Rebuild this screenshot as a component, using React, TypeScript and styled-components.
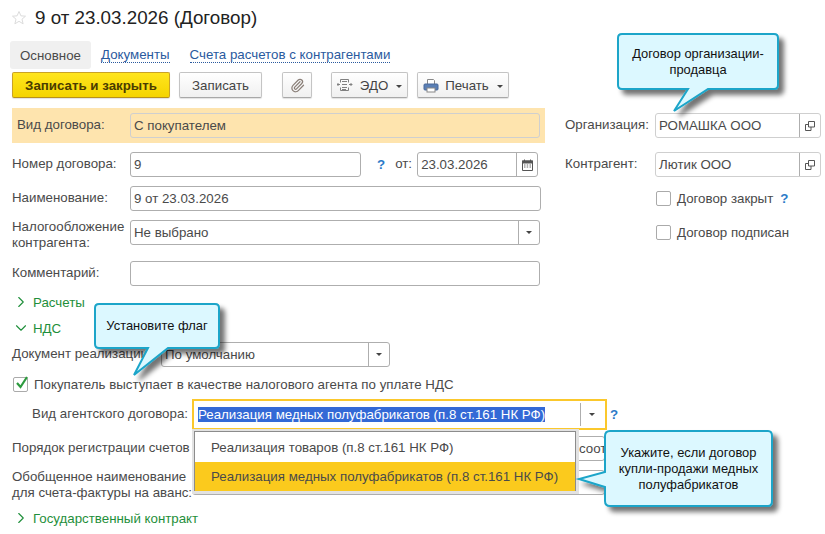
import React from 'react'
import styled, { createGlobalStyle } from 'styled-components'
import { ChevronDown, ChevronRight, Paperclip } from 'lucide-react'

const GlobalStyle = createGlobalStyle`
  html, body {
    margin: 0;
    padding: 0;
    background: #fff;
  }
  body {
    font-family: "Liberation Sans", Arial, sans-serif;
    font-size: 13.3px;
    color: #4a4a4a;
  }
`

const Page = styled.div`
  position: relative;
  width: 825px;
  height: 534px;
  overflow: hidden;
  box-sizing: border-box;
  padding: 0 4px 0 12px;
`

const TitleBar = styled.div`
  height: 41px;
  display: flex;
  align-items: center;
  gap: 8px;
  margin-left: -1px;
  padding-bottom: 5px;
  box-sizing: border-box;
`

const Title = styled.h1`
  margin: 0;
  font-size: 18.8px;
  font-weight: 400;
  color: #222;
`

const Tabs = styled.div`
  height: 28px;
  display: flex;
  align-items: center;
  margin-left: -2px;
`

const ActiveTab = styled.div`
  height: 28px;
  width: 81px;
  display: flex;
  align-items: center;
  justify-content: center;
  background: #f0f0f0;
  border-radius: 3px;
`

const TabLink = styled.a<{ $gap: number }>`
  margin-left: ${(p) => p.$gap}px;
  color: #2a5a9e;
  border-bottom: 1px dotted #2a5a9e;
  line-height: 14px;
`

const Toolbar = styled.div`
  margin-top: 3px;
  height: 26px;
  display: flex;
`

const Button = styled.button<{ $width: number; $gap?: number }>`
  width: ${(p) => p.$width}px;
  margin-left: ${(p) => p.$gap || 0}px;
  height: 26px;
  box-sizing: border-box;
  display: flex;
  align-items: center;
  justify-content: center;
  gap: 6px;
  padding: 0;
  font: inherit;
  color: #444;
  border: 1px solid #c4c4c4;
  border-bottom-color: #a8a8a8;
  border-radius: 2px;
  background: linear-gradient(#fff, #f0f0f0);
  box-shadow: 0 1px 1px rgba(0, 0, 0, 0.12);
`

const PrimaryButton = styled(Button)`
  color: #4a3c00;
  font-weight: 700;
  border: 1px solid #c9a227;
  border-bottom-color: #b8911a;
  background: linear-gradient(#ffe51e, #f5d400);
`

const Caret = styled.span`
  width: 0;
  height: 0;
  margin-left: 2px;
  margin-top: 2px;
  border-left: 3px solid transparent;
  border-right: 3px solid transparent;
  border-top: 3px solid #444;
`

const Columns = styled.div`
  display: flex;
  margin-top: 10px;
`

const LeftColumn = styled.div`
  width: 533px;
`

const RightColumn = styled.div`
  margin-left: 20px;
  width: 256px;
`

const Band = styled.div`
  height: 35px;
  display: flex;
  align-items: center;
  padding-left: 5px;
  background: #fee4ae;
`

const Row = styled.div<{ $top: number; $height?: number }>`
  display: flex;
  align-items: center;
  height: ${(p) => p.$height || 25}px;
  margin-top: ${(p) => p.$top}px;
`

const Label = styled.label<{ $width: number }>`
  width: ${(p) => p.$width}px;
  flex: none;
  line-height: 16px;
  padding-bottom: 2px;
  white-space: nowrap;
`

const MultilineLabel = styled(Label)`
  align-self: flex-start;
  margin-top: -1px;
  padding-bottom: 0;
`

const AgentLabel = styled(Label)`
  box-sizing: border-box;
  padding-right: 4px;
  text-align: right;
`

const DateLabel = styled(Label)`
  margin-left: 10px;
`

const Field = styled.div<{ $width: number; $disabled?: boolean }>`
  width: ${(p) => p.$width}px;
  height: 25px;
  flex: none;
  box-sizing: border-box;
  display: flex;
  align-items: center;
  padding-left: 3px;
  border: 1px solid ${(p) => (p.$disabled ? '#cfcfcf' : '#aeaeae')};
  border-radius: 3px;
  background: ${(p) => (p.$disabled ? 'transparent' : '#fff')};
  white-space: nowrap;
`

const FieldValue = styled.span`
  flex: 1;
`

const HiddenValue = styled(FieldValue)`
  padding-left: 383px;
`

const FieldButton = styled.span`
  width: 20px;
  height: 100%;
  flex: none;
  display: flex;
  align-items: center;
  justify-content: center;
  border-left: 1px solid #aeaeae;
`

const Help = styled.span<{ $gap: number }>`
  margin-left: ${(p) => p.$gap}px;
  color: #2b7bc8;
  font-weight: 700;
`

const CheckRow = styled.div<{ $top: number; $left?: number }>`
  display: flex;
  align-items: center;
  gap: 6px;
  height: 16px;
  margin-top: ${(p) => p.$top}px;
  margin-left: ${(p) => p.$left || 0}px;
`

const CheckBox = styled.span`
  position: relative;
  width: 15px;
  height: 15px;
  flex: none;
  box-sizing: border-box;
  background: #fff;
  border: 1px solid #aaa;
  border-radius: 2px;
`

const CheckMark = styled.svg`
  position: absolute;
  left: 0;
  top: -3px;
`

const Group = styled.div<{ $top: number }>`
  display: flex;
  align-items: center;
  gap: 3px;
  height: 16px;
  margin-top: ${(p) => p.$top}px;
  color: #1f8f3b;
`

const ActiveField = styled.div`
  width: 415px;
  height: 31px;
  flex: none;
  box-sizing: border-box;
  display: flex;
  align-items: center;
  padding-left: 4px;
  background: #fff;
  border: 2px solid #fbc82c;
  white-space: nowrap;
`

const Selection = styled.span`
  color: #fff;
  background: #3369d6;
  line-height: 15px;
`

const ActiveValue = styled.span`
  width: 382px;
  flex: none;
`

const ActiveButton = styled.span`
  height: 23px;
  width: 22px;
  display: flex;
  align-items: center;
  justify-content: center;
  border-left: 1px solid #aeaeae;
`

const Popup = styled.div`
  position: absolute;
  left: 192px;
  top: 429px;
  width: 387px;
  height: 65px;
  box-sizing: border-box;
  padding: 2px 3px 3px 2px;
  background: #e2e2e2;
`

const PopupList = styled.div`
  height: 100%;
  box-sizing: border-box;
  padding-top: 1px;
  background: #fff;
  border: 1px solid #8c8c8c;
`

const PopupItem = styled.div<{ $active?: boolean }>`
  height: 29px;
  display: flex;
  align-items: center;
  padding-left: 16px;
  white-space: nowrap;
  background: ${(p) => (p.$active ? '#fbca1d' : 'transparent')};
`

const Callout = styled.div<{ $left: number; $top: number; $width: number; $height: number }>`
  position: absolute;
  left: ${(p) => p.$left}px;
  top: ${(p) => p.$top}px;
  width: ${(p) => p.$width}px;
  height: ${(p) => p.$height}px;
  display: flex;
  align-items: center;
  justify-content: center;
  text-align: center;
  font-size: 12.9px;
  line-height: 16px;
  color: #111;
`

const CalloutShape = styled.svg`
  position: absolute;
  left: 0;
  top: 0;
  overflow: visible;
`

const CalloutText = styled.div`
  position: relative;
`

const bubblePath = (w: number, h: number, tail: string) => {
  const r = 5
  return `M${r} 1 H${w - r} Q${w - 1} 1 ${w - 1} ${r} V${h - r} Q${w - 1} ${h - 1} ${w - r} ${h - 1} ${tail} H${r} Q1 ${h - 1} 1 ${h - r} V${r} Q1 1 ${r} 1 Z`
}

const Bubble = ({ w, h, d }: { w: number; h: number; d: string }) => {
  const id = `shadow${w}`
  return (
    <CalloutShape width={w} height={h}>
      <defs>
        <filter id={id} x="-20%" y="-20%" width="150%" height="170%">
          <feGaussianBlur in="SourceAlpha" stdDeviation="2.5" />
          <feOffset dx="5" dy="5" />
          <feComponentTransfer>
            <feFuncA type="linear" slope="0.55" />
          </feComponentTransfer>
          <feMerge>
            <feMergeNode />
            <feMergeNode in="SourceGraphic" />
          </feMerge>
        </filter>
      </defs>
      <path d={d} fill="#dcf8ff" stroke="#1ba5c9" strokeWidth="2" filter={`url(#${id})`} />
    </CalloutShape>
  )
}

const StarIcon = () => (
  <svg width="16" height="16" viewBox="0 0 16 16">
    <path d="M8 1.5l1.9 4.3 4.6.4-3.5 3 1.1 4.6L8 11.3l-4.1 2.5L5 9.2l-3.5-3 4.6-.4z" fill="#fff" stroke="#dcdcdc" />
  </svg>
)

const EdoIcon = () => (
  <svg width="17" height="14" viewBox="0 0 17 14" fill="none" stroke="#808080">
    <path d="M3.500 1.500h8v3M3.500 1.500v3M3.500 9.500v3h8v-3" />
    <path d="M5 3.500h5M5 6.500h5M5 9.500h5M5 11.500h4" />
    <path d="M0 6.500h3M1.500 5L0 6.500 1.500 8M12 6.500h3M13.500 5L15 6.500 13.500 8" />
  </svg>
)

const PrintIcon = () => (
  <svg width="16" height="15" viewBox="0 0 16 15" fill="none">
    <path d="M4.5 6V1.5h6l1 1V6" fill="#fff" stroke="#888" />
    <rect x="1" y="6" width="14" height="6" rx="1" fill="#5a7fb5" stroke="#48689a" />
    <rect x="4" y="10" width="8" height="4" fill="#fff" stroke="#888" />
  </svg>
)

const CalendarIcon = () => (
  <svg width="11" height="12" viewBox="0 0 11 12">
    <path d="M0.5 2h10v9.500h-10z" fill="#fff" stroke="#555" />
    <path d="M0 1.500h11v3H0z" fill="#555" />
    <path d="M2.500 0.500v2M8.500 0.500v2" stroke="#555" />
    <path d="M2 6h1.500M4.700 6h1.500M7.500 6h1.500M2 8h1.500M4.700 8h1.500M7.500 8h1.500" stroke="#666" />
  </svg>
)

const OpenIcon = () => (
  <svg width="10" height="10" viewBox="0 0 10 10" fill="none" stroke="#555">
    <path d="M3.500 0.500h6v5.500h-6z" />
    <path d="M3.500 3.500h-3v6h5.500v-3.500" />
  </svg>
)

const SelectCaret = styled(Caret)`
  margin: 0;
`

const App = () => {
  return (
    <Page>
      <GlobalStyle />
      <TitleBar>
        <StarIcon />
        <Title>9 от 23.03.2026 (Договор)</Title>
      </TitleBar>
      <Tabs>
        <ActiveTab>Основное</ActiveTab>
        <TabLink $gap={10}>Документы</TabLink>
        <TabLink $gap={20}>Счета расчетов с контрагентами</TabLink>
      </Tabs>
      <Toolbar>
        <PrimaryButton $width={158}>Записать и закрыть</PrimaryButton>
        <Button $width={83} $gap={9}>Записать</Button>
        <Button $width={30} $gap={20}>
          <Paperclip size={15} color="#8a7f78" />
        </Button>
        <Button $width={77} $gap={19}>
          <EdoIcon />
          ЭДО
          <Caret />
        </Button>
        <Button $width={92} $gap={9}>
          <PrintIcon />
          Печать
          <Caret />
        </Button>
      </Toolbar>
      <Columns>
        <LeftColumn>
          <Band>
            <Label $width={113}>Вид договора:</Label>
            <Field $width={410} $disabled>С покупателем</Field>
          </Band>
          <Row $top={9}>
            <Label $width={118}>Номер договора:</Label>
            <Field $width={231}>9</Field>
            <Help $gap={16}>?</Help>
            <DateLabel $width={22}>от:</DateLabel>
            <Field $width={121}>
              <FieldValue>23.03.2026</FieldValue>
              <FieldButton><CalendarIcon /></FieldButton>
            </Field>
          </Row>
          <Row $top={9}>
            <Label $width={118}>Наименование:</Label>
            <Field $width={411}>9 от 23.03.2026</Field>
          </Row>
          <Row $top={9}>
            <MultilineLabel $width={118}>Налогообложение<br />контрагента:</MultilineLabel>
            <Field $width={410}>
              <FieldValue>Не выбрано</FieldValue>
              <FieldButton><SelectCaret /></FieldButton>
            </Field>
          </Row>
          <Row $top={16}>
            <Label $width={118}>Комментарий:</Label>
            <Field $width={410} />
          </Row>
          <Group $top={8}>
            <ChevronRight size={18} strokeWidth={1.5} />
            Расчеты
          </Group>
          <Group $top={10}>
            <ChevronDown size={18} strokeWidth={1.5} />
            НДС
          </Group>
          <Row $top={6}>
            <Label $width={149}>Документ реализации</Label>
            <Field $width={229}>
              <FieldValue>По умолчанию</FieldValue>
              <FieldButton><SelectCaret /></FieldButton>
            </Field>
          </Row>
          <CheckRow $top={9} $left={1}>
            <CheckBox>
              <CheckMark width="16" height="16" viewBox="0 0 16 16">
                <path d="M3 8l3.500 4L13 2" fill="none" stroke="#2c9a3e" strokeWidth="2.200" />
              </CheckMark>
            </CheckBox>
            Покупатель выступает в качестве налогового агента по уплате НДС
          </CheckRow>
          <Row $top={7} $height={31}>
            <AgentLabel $width={180}>Вид агентского договора:</AgentLabel>
            <ActiveField>
              <ActiveValue>
                <Selection>Реализация медных полуфабрикатов (п.8 ст.161 НК РФ)</Selection>
              </ActiveValue>
              <ActiveButton><SelectCaret /></ActiveButton>
            </ActiveField>
            <Help $gap={3}>?</Help>
          </Row>
          <Row $top={6}>
            <Label $width={180}>Порядок регистрации счетов</Label>
            <Field $width={413}>
              <HiddenValue>соот</HiddenValue>
            </Field>
          </Row>
          <Row $top={9}>
            <MultilineLabel $width={180}>Обобщенное наименование<br />для счета-фактуры на аванс:</MultilineLabel>
            <Field $width={413} />
          </Row>
          <Group $top={15}>
            <ChevronRight size={18} strokeWidth={1.5} />
            Государственный контракт
          </Group>
        </LeftColumn>
        <RightColumn>
          <Row $top={5}>
            <Label $width={90}>Организация:</Label>
            <Field $width={166} $disabled>
              <FieldValue>РОМАШКА ООО</FieldValue>
              <FieldButton><OpenIcon /></FieldButton>
            </Field>
          </Row>
          <Row $top={14}>
            <Label $width={90}>Контрагент:</Label>
            <Field $width={166} $disabled>
              <FieldValue>Лютик ООО</FieldValue>
              <FieldButton><OpenIcon /></FieldButton>
            </Field>
          </Row>
          <CheckRow $top={13} $left={91}>
            <CheckBox />
            Договор закрыт
            <Help $gap={1}>?</Help>
          </CheckRow>
          <CheckRow $top={18} $left={91}>
            <CheckBox />
            Договор подписан
          </CheckRow>
        </RightColumn>
      </Columns>
      <Popup>
        <PopupList>
          <PopupItem>Реализация товаров (п.8 ст.161 НК РФ)</PopupItem>
          <PopupItem $active>Реализация медных полуфабрикатов (п.8 ст.161 НК РФ)</PopupItem>
        </PopupList>
      </Popup>
      <Callout $left={617} $top={33} $width={162} $height={57}>
        <Bubble w={162} h={57} d={bubblePath(162, 57, 'H91 L57 78 L71 56')} />
        <CalloutText>Договор организации-<br />продавца</CalloutText>
      </Callout>
      <Callout $left={94} $top={303} $width={126} $height={46}>
        <Bubble w={126} h={46} d={bubblePath(126, 46, 'H74 L40 72 L54 45')} />
        <CalloutText>Установите флаг</CalloutText>
      </Callout>
      <Callout $left={604} $top={430} $width={169} $height={77}>
        <Bubble w={169} h={77} d={`M6 1 H164 Q168 1 168 6 V71 Q168 76 164 76 H6 Q1 76 1 71 V57 L-25 49 L1 42 V6 Q1 1 6 1 Z`} />
        <CalloutText>Укажите, если договор<br />купли-продажи медных<br />полуфабрикатов</CalloutText>
      </Callout>
    </Page>
  )
}

export default App
